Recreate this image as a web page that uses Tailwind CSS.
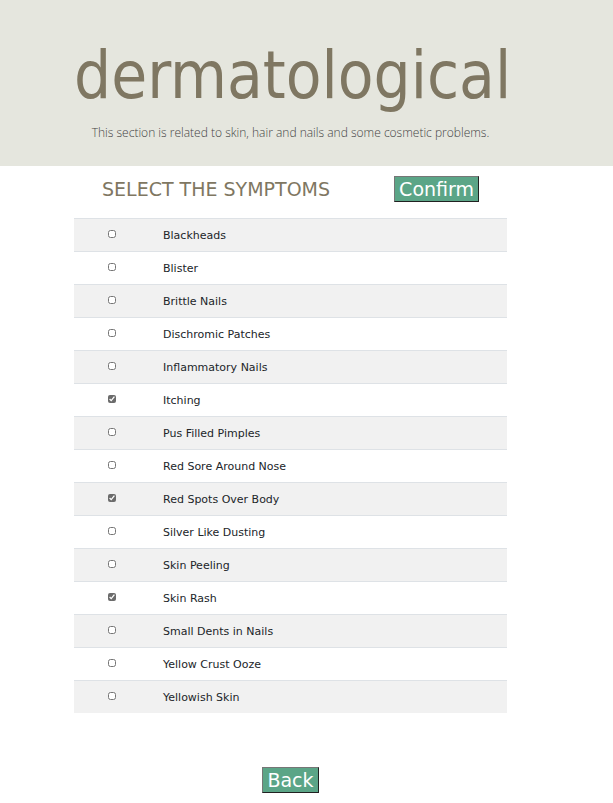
<!DOCTYPE html>
<html lang="en">
<head>
<meta charset="utf-8">
<meta name="viewport" content="width=device-width, initial-scale=1">
<title>Dermatological</title>
<script src="https://cdn.jsdelivr.net/npm/@tailwindcss/browser@4"></script>
</head>
<body class="bg-white font-['DejaVu_Sans',sans-serif] text-[11px] text-[#212529]">
<header class="bg-[#e5e6de] pt-[34px] pb-[22px] pl-[74px] pr-[106px]">
  <h1 class="text-center whitespace-nowrap font-['DejaVu_Sans_Condensed','DejaVu_Sans',sans-serif] text-[65px] leading-[84px] text-[#7f7762]">dermatological</h1>
  <p class="mt-1 text-center whitespace-nowrap font-['Open_Sans',sans-serif] text-[12px] font-light leading-[22px] text-[#444444]">This section is related to skin, hair and nails and some cosmetic problems.</p>
</header>
<main class="pl-[74px] pr-[106px]">
  <form>
    <div class="flex items-center justify-between pt-[7px] pb-[13px] pl-7 pr-7">
      <h2 class="whitespace-nowrap text-[19px] leading-8 text-[#7f7762]">SELECT THE SYMPTOMS</h2>
      <button type="button" class="h-[26px] border border-t-[#767676] border-l-[#767676] border-r-[#212121] border-b-[#212121] bg-[#5ba587] px-1 text-[19px] leading-6 text-white">Confirm</button>
    </div>
    <table class="w-full border-separate border-spacing-0">
      <tbody id="symptoms"></tbody>
    </table>
    <div class="flex justify-center pt-[54px] pb-[10px]">
      <button type="button" class="h-[26px] border border-t-[#767676] border-l-[#767676] border-r-[#212121] border-b-[#212121] bg-[#5ba587] px-1 text-[19px] leading-6 text-white">Back</button>
    </div>
  </form>
</main>
<script>
const symptoms = ["Blackheads", "Blister", "Brittle Nails", "Dischromic Patches", "Inflammatory Nails", "Itching", "Pus Filled Pimples", "Red Sore Around Nose", "Red Spots Over Body", "Silver Like Dusting", "Skin Peeling", "Skin Rash", "Small Dents in Nails", "Yellow Crust Ooze", "Yellowish Skin"];
const selected = new Set(["Itching", "Red Spots Over Body", "Skin Rash"]);
document.getElementById("symptoms").innerHTML = symptoms.map((name, i) => `
  <tr class="odd:bg-[#f1f1f1]">
    <td class="h-[33px] w-[76px] border-t border-[#dee2e6] p-0"><input id="symptom-${i}" type="checkbox" class="mx-auto mb-[2px] block size-2 accent-[#6b6b6b]" ${selected.has(name) ? "checked" : ""}></td>
    <td class="border-t border-[#dee2e6] pt-[2px] pb-0 pl-[13px] pr-0 leading-4"><label for="symptom-${i}">${name}</label></td>
  </tr>`).join("");
</script>
</body>
</html>
